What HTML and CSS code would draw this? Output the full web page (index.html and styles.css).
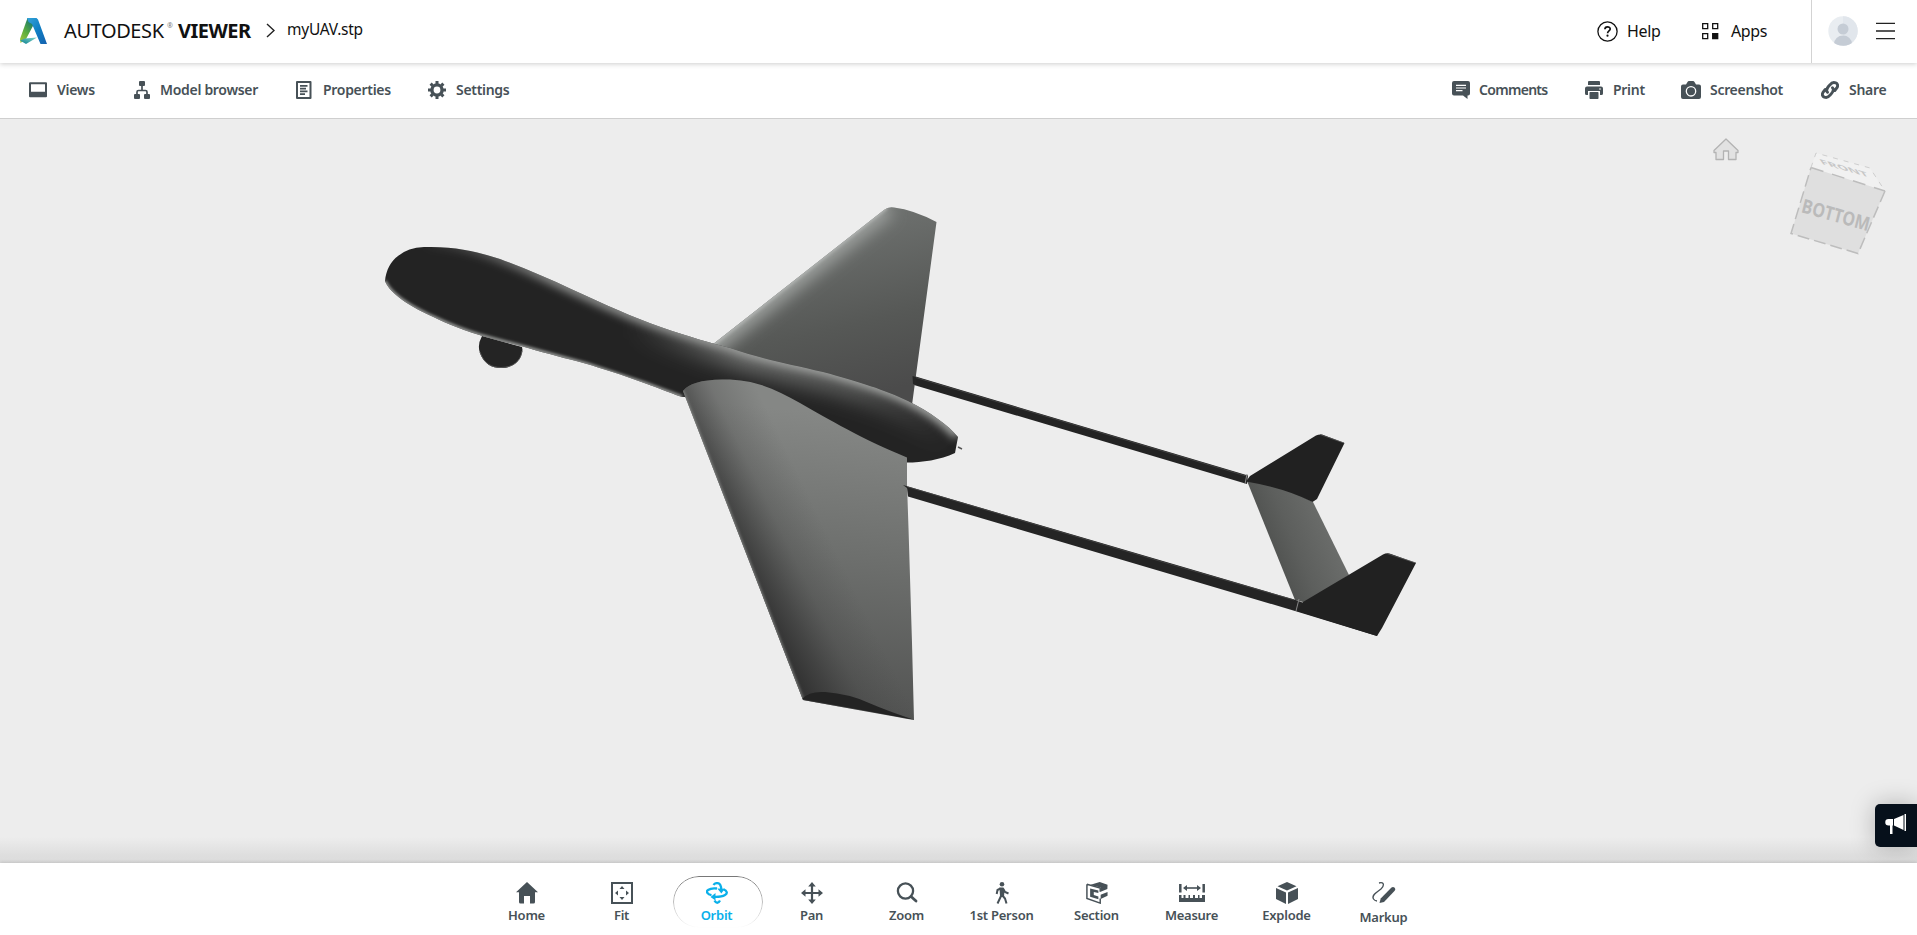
FILE: index.html
```html
<!DOCTYPE html>
<html lang="en">
<head>
<meta charset="utf-8">
<title>Autodesk Viewer</title>
<link rel="stylesheet" href="styles.css">
</head>
<body>
<header class="header">
  <svg class="logo" viewBox="0 0 27 27">
    <defs>
      <linearGradient id="lg1" x1="0" y1="1" x2=".6" y2="0"><stop offset="0" stop-color="#a8c93a"/><stop offset=".5" stop-color="#5cad3c"/><stop offset="1" stop-color="#1c7a6c"/></linearGradient>
      <linearGradient id="lg2" x1="0" y1="0" x2="1" y2="1"><stop offset="0" stop-color="#35a3d8"/><stop offset=".5" stop-color="#0f7fc4"/><stop offset="1" stop-color="#1560ae"/></linearGradient>
      <linearGradient id="lg3" x1="0" y1="1" x2="1" y2="0"><stop offset="0" stop-color="#0d7f90"/><stop offset="1" stop-color="#7fd6c8"/></linearGradient>
    </defs>
    <path d="M7.500 0h4l2.500 6-8 15-5.500 4L0 21z" fill="url(#lg1)"/>
    <path d="M7 0h9.500l1.500 1.500L27 26h-6.500L12 6 8.500 4z" fill="url(#lg2)"/>
    <path d="M0 22.500l5-2 12-1-11 6.500z" fill="url(#lg3)"/>
  </svg>
  <div class="brand"><span class="brand-a">AUTODESK</span><sup class="reg">®</sup><span class="brand-b">VIEWER</span></div>
  <svg class="chevron" viewBox="0 0 9 15"><path d="M1 1l7 6.500-7 6.500" fill="none" stroke="#222" stroke-width="1.400"/></svg>
  <div class="filename">myUAV.stp</div>
  <nav class="header-right">
    <div class="help">
      <svg width="21" height="21" viewBox="0 0 21 21"><circle cx="10.500" cy="10.500" r="9.600" fill="none" stroke="#111" stroke-width="1.300"/><path d="M7.900 8.300c0-3.300 5.300-3.200 5.300-.3 0 1.900-2.600 1.900-2.600 4.200" fill="none" stroke="#111" stroke-width="1.700"/><circle cx="10.500" cy="14.700" r="1.100" fill="#111"/></svg>
      <span>Help</span>
    </div>
    <div class="apps">
      <svg width="17" height="17" viewBox="0 0 17 17" fill="none" stroke="#111" stroke-width="1.300"><path d="M.7.700h5v5h-5zM10.700.700h5v5h-5zM.7 10.700h5v5h-5z"/><path d="M10.700 10.700h5v5h-5z" fill="#111"/></svg>
      <span>Apps</span>
    </div>
    <div class="account">
      <svg width="30" height="30" viewBox="0 0 30 30"><defs><clipPath id="av"><circle cx="15" cy="15" r="14.700"/></clipPath></defs><g clip-path="url(#av)"><path d="M0 0h30v30H0z" fill="#e9edf1"/><path d="M15 0h15v30H15z" fill="#e1e6ec"/><circle cx="15" cy="13" r="5.500" fill="#c5ccd5"/><ellipse cx="15" cy="28" rx="9" ry="8.500" fill="#c5ccd5"/></g></svg>
      <svg width="19" height="18" viewBox="0 0 19 18"><path d="M0 1.300h19M0 9h19M0 16.700h19" stroke="#222" stroke-width="1.300"/></svg>
    </div>
  </nav>
</header>

<div class="toolbar">
  <div class="tools-left">
    <div class="tool"><svg width="18" height="18" viewBox="0 0 18 18"><path fill-rule="evenodd" d="M1 1.300h16a1 1 0 0 1 1 1v13a1 1 0 0 1-1 1H1a1 1 0 0 1-1-1v-13a1 1 0 0 1 1-1zM2 3.200v7.500h14V3.200z"/></svg><span>Views</span></div>
    <div class="tool model"><svg width="16" height="18" viewBox="0 0 16 18"><rect x="5" width="6" height="5" rx="1"/><rect y="13" width="6" height="5" rx="1"/><rect x="10" y="13" width="6" height="5" rx="1"/><path d="M8 4v5.500M3 14V11q0-1.500 1.500-1.500h7q1.500 0 1.500 1.500v3" fill="none" stroke="#475157" stroke-width="1.700"/></svg><span>Model browser</span></div>
    <div class="tool props"><svg width="16" height="18" viewBox="0 0 16 18"><path fill-rule="evenodd" d="M1 0h13.500a1 1 0 0 1 1 1v16a1 1 0 0 1-1 1H1a1 1 0 0 1-1-1V1a1 1 0 0 1 1-1zM2 2v14h11.500V2z"/><path d="M4 4.800h7.500M4 7.600h6M4 10.400h7.500M4 13.200h5" stroke="#475157" stroke-width="1.700"/></svg><span>Properties</span></div>
    <div class="tool"><svg width="18" height="18" viewBox="0 0 18 18"><circle cx="9" cy="9" r="5.100" fill="none" stroke="#475157" stroke-width="3.400"/><path d="M9 0v3M9 15v3M0 9h3M15 9h3M2.600 2.600l2 2M13.400 13.400l2 2M2.600 15.400l2-2M13.400 4.600l2-2" stroke="#475157" stroke-width="3"/></svg><span>Settings</span></div>
  </div>
  <div class="tools-right">
    <div class="tool tight"><svg width="18" height="18" viewBox="0 0 18 18"><path fill-rule="evenodd" d="M2 0h14a2 2 0 0 1 2 2v10.500a2 2 0 0 1-2 2h-.5V18L11 14.500H2a2 2 0 0 1-2-2V2a2 2 0 0 1 2-2z"/><path d="M4 4.300h10M4 7h10M4 9.700h6.500" stroke="#fff" stroke-width="1.200"/></svg><span>Comments</span></div>
    <div class="tool"><svg width="18" height="18" viewBox="0 0 18 18"><path d="M4 0h10q1 0 1 1v3H3V1q0-1 1-1zM2 5.500h14q2 0 2 2v5q0 1.500-1.500 1.500H15v-4H3v4H1.500Q0 14 0 12.500v-5q0-2 2-2z"/><rect x="4.500" y="11" width="9" height="7" rx=".7"/><circle cx="15" cy="8" r=".8" fill="#fff"/></svg><span>Print</span></div>
    <div class="tool shot"><svg width="20" height="18" viewBox="0 0 20 18"><path d="M6.500 1Q7 0 8 0h4q1 0 1.500 1L15 3.500h3q2 0 2 2V16q0 2-2 2H2q-2 0-2-2V5.500q0-2 2-2h3z"/><circle cx="10" cy="10.300" r="4.700" fill="none" stroke="#fff" stroke-width="1.300"/></svg><span>Screenshot</span></div>
    <div class="tool"><svg width="18" height="18" viewBox="0 0 18 18" fill="none"><path d="M6.500 11.300C4.700 9.500 5.800 7 9 3.800 12-.2 19 1.800 15.800 7l-2 2.500M11.500 6.700c1.800 1.800.7 4.300-2.500 7.500-3 4-10 2-6.800-3.200l2-2.500" stroke="#475157" stroke-width="2.900" stroke-linecap="round"/></svg><span>Share</span></div>
  </div>
</div>

<main class="viewport">
  <svg class="scene" viewBox="0 119 1917 744">
    <defs>
      <path id="body" d="M385 281C386 270 391 261 398 256Q408 247.500 424 247C457 246 478 252 500 259C524 268 548 278 571 289C606 305 632 317 662 327.500C690 337 710 343 730 348C765 360 790 364 823 372C860 382 885 390 908 401C930 412 948 425 958 437L955 453C940 460 922 462.500 907 462.500L860 445 760 395 682 397C668 392 655 387 647 384C620 374 600 368 587 364C565 358 548 354 528 348C510 343 495 340 481 335.500C456 328 442 321 429 315C410 306 390 294 385 281Z"/>
      <path id="wing" d="M683 391Q691 380 722 379.500C755 379 775 389 800 403C830 420 860 438 907 457.500L907 484 908.500 528 912 643 914 720Q880 714 803 700Z"/>
      <path id="rear" d="M712 345L884 210Q888 206.500 894 207.500Q914 210 936.500 222L912 405Z"/>
      <path id="stab" d="M1247 481Q1285 486 1313 502L1349 575 1307 603 1295 600Z"/>
      <clipPath id="cb"><use href="#body"/></clipPath><clipPath id="cw"><use href="#wing"/></clipPath><clipPath id="cr"><use href="#rear"/></clipPath>
      <linearGradient id="gw" gradientUnits="userSpaceOnUse" x1="845" y1="415" x2="815" y2="715"><stop offset="0" stop-color="#858785"/><stop offset=".45" stop-color="#6e706e"/><stop offset="1" stop-color="#525352"/></linearGradient>
      <linearGradient id="gr" gradientUnits="userSpaceOnUse" x1="850" y1="215" x2="890" y2="390"><stop offset="0" stop-color="#6e716f"/><stop offset=".6" stop-color="#565856"/><stop offset="1" stop-color="#4b4b4b"/></linearGradient>
      <linearGradient id="gt" gradientUnits="userSpaceOnUse" x1="420" y1="0" x2="870" y2="0"><stop offset="0" stop-color="#aaa" stop-opacity="0"/><stop offset=".3" stop-color="#aaacaa" stop-opacity=".75"/><stop offset="1" stop-color="#a8aaa8"/></linearGradient>
      <linearGradient id="gm" gradientUnits="userSpaceOnUse" x1="630" y1="0" x2="950" y2="0"><stop offset="0" stop-color="#888a88" stop-opacity="0"/><stop offset=".35" stop-color="#868886" stop-opacity=".75"/><stop offset=".7" stop-color="#7c7e7c" stop-opacity=".6"/><stop offset="1" stop-color="#777" stop-opacity="0"/></linearGradient>
      <linearGradient id="gs" gradientUnits="userSpaceOnUse" x1="1265" y1="540" x2="1325" y2="515"><stop offset="0" stop-color="#505250"/><stop offset=".4" stop-color="#5d5f5d"/><stop offset="1" stop-color="#6b6d6b"/></linearGradient>
      <linearGradient id="gl" gradientUnits="userSpaceOnUse" x1="735" y1="547" x2="815" y2="508"><stop offset="0" stop-color="#303030" stop-opacity=".9"/><stop offset=".25" stop-color="#333" stop-opacity=".6"/><stop offset=".55" stop-color="#3c3c3c" stop-opacity=".25"/><stop offset="1" stop-color="#444" stop-opacity="0"/></linearGradient>
      <filter id="b1" x="-20%" y="-20%" width="140%" height="140%"><feGaussianBlur stdDeviation="1.500"/></filter>
      <filter id="b5" x="-20%" y="-20%" width="140%" height="140%"><feGaussianBlur stdDeviation="4.500"/></filter>
      <filter id="b7" x="-20%" y="-20%" width="140%" height="140%"><feGaussianBlur stdDeviation="8"/></filter>
      <filter id="b9" x="-30%" y="-30%" width="160%" height="160%"><feGaussianBlur stdDeviation="10"/></filter>
    </defs>
    <!-- tail booms -->
    <path d="M914 376L1248 475.500 1247 484 914 385z" fill="#232323"/>
    <path d="M914 377L1248 476.500" stroke="#484848" stroke-width=".8" fill="none"/>
    <use href="#rear" fill="url(#gr)"/>
    <g clip-path="url(#cr)"><path d="M700 352L886 205" stroke="#9da09e" stroke-width="24" filter="url(#b7)"/><path d="M700 354L886 207" stroke="#b0b3b1" stroke-width="5" filter="url(#b1)"/></g>
    <path d="M912.500 376l3.500 1v8l-3-1z" fill="#252525"/>
    <!-- sensor ball -->
    <path d="M482 336Q477 345 480 353C484 364 492 368 501 368C513 368 521 361 522.500 350L522 347Z" fill="#242424"/>
    <path d="M480 352C484 364 492 367.500 501 367.500C513 367.500 521 361 522 351" fill="none" stroke="#555" stroke-width="1"/>
    <!-- fuselage -->
    <use href="#body" fill="#232323"/>
    <g clip-path="url(#cb)">
      <path d="M630 322C690 344 760 362 823 378C870 390 910 406 950 438" fill="none" stroke="url(#gm)" stroke-width="26" filter="url(#b9)"/>
      <path d="M424 243Q457 242 490 254C520 264 545 276 571 288C606 304 632 316 662 325.500C690 335 710 341 730 346C765 358 790 362 823 370C860 380 885 388 908 399C930 410 948 423 958 435" fill="none" stroke="url(#gt)" stroke-width="11" filter="url(#b5)"/>
      <path d="M385 281C390 294 410 306 429 315C442 321 456 328 481 335.500L528 348 587 364 647 384 682 397" fill="none" stroke="#a5a7a5" stroke-width="3" filter="url(#b1)"/>
    </g>
    <path d="M958 447l4 2" stroke="#555" stroke-width="1.500"/>
    <!-- main wing -->
    <use href="#wing" fill="url(#gw)"/>
    <use href="#wing" fill="url(#gl)"/>
    <g clip-path="url(#cw)">
      <path d="M682 390L802 699" stroke="#8f918f" stroke-width="2.500" filter="url(#b1)"/>
      <path d="M802 699Q809 691 825 692Q850 694 869 703Q890 712 915 720Z" fill="#232323"/>
    </g>
    <path d="M903 485L1180 566 1296 600 1378 632 1377 636 1295 611 1180 577 908 496.500 907 488Z" fill="#242424"/>
    <path d="M908 487L1180 567 1294 600" stroke="#484848" stroke-width=".8" fill="none"/>
    <!-- tail -->
    <use href="#stab" fill="url(#gs)"/>
    <path d="M1250 476L1316 435.500Q1319 434 1322 434.500L1344.500 443 1317 499 1312.500 502Q1285 488 1246 481.500Z" fill="#212121"/>
    <path d="M1303 602L1383 554.500Q1387 552.500 1391 554L1416 563 1382 628 1377 636 1297 611Z" fill="#212121"/>
    <path d="M1247 474l-2 10M1299 599l-3 12" stroke="#888" fill="none"/>
    <path d="M1320 434.500l24 8.500M1387 553.500l29 9.500" stroke="#555" stroke-width=".8"/>
    <!-- view cube -->
    <g stroke="#bdbdbd" stroke-width="1.500">
      <path d="M1811 167.500L1816 153 1870 168 1885 191Z" fill="#f1f1f1" stroke="none"/>
      <path d="M1811 167.500L1885 191 1858 253.500 1791 233.500Z" fill="#dfdfdf" stroke="none"/>
      <path d="M1811 167.500L1885 191" stroke-dasharray="13 9"/>
      <path d="M1885 191L1858 253.500 1791 233.500 1811 167.500" fill="none" stroke-dasharray="12 5"/>
      <path d="M1811 167.500L1816 153 1870 168 1885 191" fill="none" stroke="#cecece" stroke-width="1" stroke-dasharray="5 6"/>
    </g>
    <text class="cube" transform="matrix(.95 .27 -.25 .98 1800.500 212)" textLength="71" lengthAdjust="spacingAndGlyphs">BOTTOM</text>
    <text class="cube front" transform="matrix(.95 .27 .35 .5 1822 164)" textLength="50" lengthAdjust="spacingAndGlyphs">FRONT</text>
    <path d="M1714 150.500L1726 139l12 11.500v2h-2V159.500h-7.500V151h-5v8.500H1716v-7h-2z" fill="#e2e2e2" stroke="#b3b3b3" stroke-width="1.300" stroke-linejoin="round"/>
  </svg>
  <div class="ground"></div>
  <button class="feedback" aria-label="Feedback"><svg width="22" height="21" viewBox="0 0 22 21" fill="#fff"><path d="M3.500 5H8v6.500H7.500V20H5v-8.500H3.500a3.200 3.200 0 0 1 0-6.500zM9 5L18.500 1v15L9 11.500zM19.500 0h1.500v17h-1.500z"/></svg></button>
</main>

<footer class="dock">
  <div class="dock-item"><svg viewBox="0 0 22 22"><path d="M11 0l11 10.200h-3V20q0 1.500-1.500 1.500H14V14H8v7.500H4.500Q3 21.500 3 20v-9.800H0z"/></svg><span>Home</span></div>
  <div class="dock-item"><svg viewBox="0 0 22 22"><path d="M1 1h20v20H1z" fill="none" stroke="#475157" stroke-width="2"/><path d="M11 4l2.500 3h-5zM11 18l2.500-3h-5zM4 11l3-2.500v5zM18 11l-3-2.500v5z"/></svg><span>Fit</span></div>
  <div class="dock-item active"><svg viewBox="0 0 22 22"><path d="M7.500 3C9 .6 13 .3 14.300 3c.6 1.200.9 2.500 1 4.500M5.500 13.200C1.500 12.500-.3 9.500 2 8c2.300-1.600 5.500-2 9-1.500M17.500 7.300c3.500 1.200 4.500 4 1.500 5.800-2.800 1.700-7 2-11.500 1.800M8.500 18.500c1.500 3 4 3 5.500 0" fill="none" stroke="#0ab0ea" stroke-width="2.300"/><path d="M11.300 6.500l7.400.2-3.300 4.800zM9.500 11v7.500L4.500 15z" fill="#0ab0ea"/></svg><span>Orbit</span></div>
  <div class="dock-item"><svg viewBox="0 0 22 22"><path d="M11 3v16M3 11h16" stroke="#475157" stroke-width="2.200"/><path d="M11 0l3.800 4.500H7.200zM11 22l3.800-4.500H7.200zM0 11l4.500-3.800v7.600zM22 11l-4.500-3.800v7.600z"/></svg><span>Pan</span></div>
  <div class="dock-item"><svg viewBox="0 0 22 22"><circle cx="9.500" cy="9" r="7.600" fill="none" stroke="#475157" stroke-width="2.300"/><path d="M15 14.500l5 4.500" stroke="#475157" stroke-width="2.800" stroke-linecap="round"/></svg><span>Zoom</span></div>
  <div class="dock-item"><svg viewBox="0 0 22 22"><circle cx="11" cy="2.300" r="2.300"/><path d="M11 6.500L10.500 13M10.500 13l-4 8.500M11 13l3 3.500 1.500 5M9.500 6.500L6.500 8 5.700 12M12 6.500l2 3.500 3.500 1.500" fill="none" stroke="#475157" stroke-width="2"/><path d="M8.500 5.500h4l1 3-.5 6H9z"/></svg><span>1st Person</span></div>
  <div class="dock-item"><svg viewBox="0 0 24 24"><path d="M5 3L15 0l8.500 3-.2 4.500-7.300 3V6L8 4zM16 14l7.500-3v4L16 18.500z"/><path d="M1 2.500l14.500 4v4M1 2.500v15.500L15.500 23v-5" fill="none" stroke="#475157" stroke-width="1.600"/><path fill-rule="evenodd" d="M4.500 7l9 2.300v2.700L8.500 10.800v3.500l5 1.500v3L4.500 16z"/></svg><span>Section</span></div>
  <div class="dock-item"><svg class="wide" viewBox="0 0 26 22"><path d="M1.300 2v8.500M24.700 2v8.500" stroke="#475157" stroke-width="2.500"/><path d="M6 6h14" stroke="#475157" stroke-width="1.600"/><path d="M4 6l4-3v6zM22 6l-4-3v6zM0 13h2.500v3h2v-3h2v3h3v-3h1.500v3h3v-3h2v3h3v-3h1.500v3h2.500v-3H26v7H0z"/></svg><span>Measure</span></div>
  <div class="dock-item"><svg viewBox="0 0 22 22"><path d="M11 0l9.500 4.300L11 8.500 1.500 4.300zM0 6l10 4.500V22L0 17zM22 6l-10 4.500V22l10-5z"/></svg><span>Explode</span></div>
  <div class="dock-item markup"><svg class="pen" viewBox="0 0 24 24"><path d="M7 1c6-1.500 5 3.500 2 6-3.500 3-10 6-7.500 10 .8 1.300 1.800 1.800 3.500 2" fill="none" stroke="#475157" stroke-width="1.300"/><path d="M19.500 5.500q1.500-1.200 3.200.2 1.300 1.500 0 3L12 20l-4.500 1L8.700 16.500z"/></svg><span>Markup</span></div>
</footer>
</body>
</html>
```
FILE: styles.css
```css
* { box-sizing: border-box; }
body {
  margin: 0;
  width: 1917px;
  height: 935px;
  overflow: hidden;
  display: grid;
  grid-template-rows: 63px 56px 744px 72px;
  background: #fff;
  font-family: "Noto Sans", sans-serif;
  color: #111;
}
svg { display: block; flex: none; }
.header {
  display: flex;
  align-items: center;
  padding: 0 0 1px 20px;
  position: relative;
  z-index: 2;
  box-shadow: 0 1px 5px rgba(0, 0, 0, .2);
  background: #fff;
}
.logo { width: 27px; height: 27px; margin-top: 1px; }
.brand {
  display: flex;
  width: 187px;
  margin-left: 17px;
  font-size: 20px;
  line-height: 26px;
  white-space: nowrap;
}
.brand-a { width: 103px; letter-spacing: -.4px; }
.reg { width: 11px; font-size: 7px; line-height: 12px; margin: 2px 0 0; color: #777; }
.brand-b { font-weight: 700; letter-spacing: -.5px; }
.chevron { width: 9px; height: 15px; margin-left: 15px; margin-bottom: 1px; }
.filename { margin-left: 12px; margin-bottom: 5px; font-size: 15.500px; letter-spacing: -.25px; }
.header-right { display: flex; height: 63px; margin-left: auto; align-items: center; font-size: 16px; }
.help, .apps { display: flex; align-items: center; }
.help { width: 105px; gap: 9px; letter-spacing: -.3px; }
.help span, .apps span { margin-bottom: 1px; }
.apps { width: 109px; gap: 12px; letter-spacing: -.4px; }
.account {
  width: 106px;
  height: 63px;
  border-left: 1px solid #d3d3d3;
  display: flex;
  align-items: center;
  gap: 18px;
  padding-left: 16px;
}
.toolbar {
  display: flex;
  justify-content: space-between;
  align-items: center;
  padding: 0 0 2px 29px;
  border-bottom: 1px solid #cfcfcf;
  font-size: 14px;
  font-weight: 600;
  color: #475157;
}
.toolbar svg, .dock svg { fill: #475157; }
.toolbar svg[fill="none"] { fill: none; }
.tools-left, .tools-right { display: grid; white-space: nowrap; }
.tools-left { grid-template-columns: 105px 162px 132px 100px; }
.tools-right { grid-template-columns: 133px 96px 140px 96px; }
.tool { display: flex; align-items: center; gap: 10px; letter-spacing: -.3px; }
.tool span { margin-bottom: 1px; }
.tool.tight { gap: 9px; letter-spacing: -.7px; }
.tool.props { gap: 11px; }
.tool.shot { gap: 9px; }
.viewport { position: relative; background: #ededed; overflow: hidden; }
.scene { width: 1917px; height: 744px; }
.cube { font: 700 19px "Open Sans", sans-serif; fill: #bababa; }
.cube.front { font-size: 15px; fill: #c6c6c6; }
.ground {
  position: absolute;
  left: 0;
  right: 0;
  bottom: 0;
  height: 26px;
  background: linear-gradient(rgba(220, 220, 220, 0), #dedede 70%, #dcdcdc);
}
.feedback {
  position: absolute;
  right: 0;
  top: 685px;
  width: 42px;
  height: 43px;
  border: 0;
  border-radius: 5px 0 0 5px;
  padding: 0 0 2px 10px;
  background: #06101b;
  box-shadow: 0 0 24px rgba(0, 0, 0, .25);
}
.dock {
  display: flex;
  padding-left: 479px;
  background: #fff;
  box-shadow: 0 -1px 3px rgba(0, 0, 0, .12);
  position: relative;
}
.dock-item {
  width: 95px;
  height: 72px;
  padding-top: 19px;
  display: flex;
  flex-direction: column;
  align-items: center;
  font-size: 13px;
  line-height: 18px;
  font-weight: 600;
  letter-spacing: -.25px;
  color: #475157;
  white-space: nowrap;
}
.dock-item span { margin-top: 2px; }
.dock svg { width: 22px; height: 22px; }
.dock svg.wide { width: 26px; }
.dock svg.pen { width: 24px; height: 24px; }
.dock-item.active { color: #0ab0ea; position: relative; }
.dock-item.active::before {
  content: "";
  position: absolute;
  left: 4px;
  top: 13px;
  width: 88px;
  height: 50px;
  border: 1px solid #777;
  border-radius: 26px;
  -webkit-mask-image: linear-gradient(#000, transparent);
  mask-image: linear-gradient(#000, transparent);
}
.dock-item.markup { width: 99px; }
```
